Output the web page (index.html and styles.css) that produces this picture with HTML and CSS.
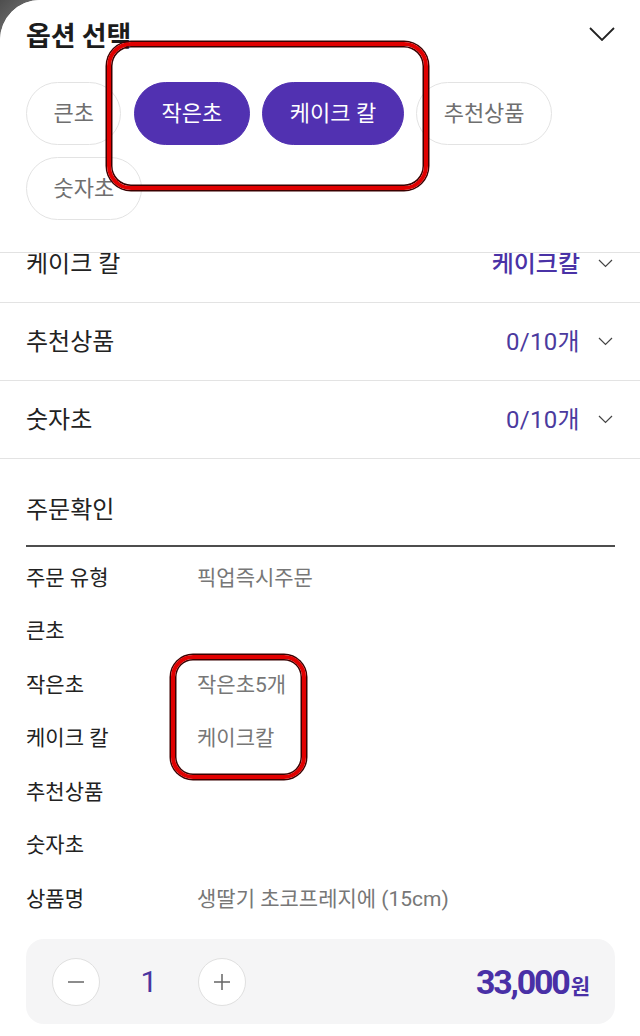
FILE: index.html
```html
<!DOCTYPE html>
<html lang="ko">
<head>
<meta charset="utf-8">
<title>옵션 선택</title>
<link rel="stylesheet" href="styles.css">
</head>
<body>
<div class="sheet">
  <header class="opt-head">
    <div class="opt-title-row">
      <h2 class="opt-title">옵션 선택</h2>
      <svg class="head-chev" width="26" height="14" viewBox="0 0 26 14"><path d="M1 1 L13 13 L25 1" fill="none" stroke="#222" stroke-width="1.8"/></svg>
    </div>
    <div class="chips">
      <span class="chip">큰초</span>
      <span class="chip chip-on">작은초</span>
      <span class="chip chip-on">케이크 칼</span>
      <span class="chip">추천상품</span>
      <span class="chip">숫자초</span>
    </div>
  </header>

  <div class="scroll">
    <div class="opt-list">
      <div class="opt-row">
        <span class="opt-label">케이크 칼</span>
        <span class="opt-right"><span class="opt-val opt-val-strong">케이크칼</span><svg class="row-chev" width="15" height="9" viewBox="0 0 15 9"><path d="M1 1 L7.5 7.5 L14 1" fill="none" stroke="#444" stroke-width="1.2"/></svg></span>
      </div>
      <div class="opt-row">
        <span class="opt-label">추천상품</span>
        <span class="opt-right"><span class="opt-val">0/10개</span><svg class="row-chev" width="15" height="9" viewBox="0 0 15 9"><path d="M1 1 L7.5 7.5 L14 1" fill="none" stroke="#444" stroke-width="1.2"/></svg></span>
      </div>
      <div class="opt-row">
        <span class="opt-label">숫자초</span>
        <span class="opt-right"><span class="opt-val">0/10개</span><svg class="row-chev" width="15" height="9" viewBox="0 0 15 9"><path d="M1 1 L7.5 7.5 L14 1" fill="none" stroke="#444" stroke-width="1.2"/></svg></span>
      </div>
    </div>

    <section class="confirm">
      <h3 class="confirm-title">주문확인</h3>
      <dl class="confirm-list">
        <dt>주문 유형</dt><dd>픽업즉시주문</dd>
        <dt>큰초</dt><dd></dd>
        <dt>작은초</dt><dd>작은초5개</dd>
        <dt>케이크 칼</dt><dd>케이크칼</dd>
        <dt>추천상품</dt><dd></dd>
        <dt>숫자초</dt><dd></dd>
        <dt>상품명</dt><dd>생딸기 초코프레지에 (15cm)</dd>
      </dl>
      <div class="qty-bar">
        <button class="qty-btn" type="button" aria-label="빼기"><svg width="18" height="18" viewBox="0 0 18 18"><path d="M1 9 H17" stroke="#666" stroke-width="1.5"/></svg></button>
        <span class="qty-num">1</span>
        <button class="qty-btn" type="button" aria-label="더하기"><svg width="18" height="18" viewBox="0 0 18 18"><path d="M1 9 H17 M9 1 V17" stroke="#666" stroke-width="1.5"/></svg></button>
        <span class="price"><span class="price-num">33,000</span><span class="price-unit">원</span></span>
      </div>
    </section>
  </div>

  <div class="mark mark-chips"></div>
  <div class="mark mark-values"></div>
</div>
</body>
</html>
```

FILE: styles.css
```css
* { box-sizing: border-box; }
html, body { margin: 0; padding: 0; }
body {
  background: linear-gradient(135deg, #4e4e4e, #8a8a8a 60px);
  font-family: Roboto, "Noto Sans CJK KR", sans-serif;
  color: #222;
}
.sheet {
  position: relative;
  width: 640px;
  height: 1036px;
  background: #fff;
  border-top-left-radius: 40px;
  overflow: hidden;
  display: flex;
  flex-direction: column;
}

/* header */
.opt-head {
  padding: 21px 25px 32px 26px;
  border-bottom: 1px solid #e2e2e2;
  background: #fff;
}
.opt-title-row {
  display: flex;
  justify-content: space-between;
  align-items: flex-start;
}
.opt-title {
  margin: 0;
  font-size: 27px;
  line-height: 32px;
  font-weight: 700;
  letter-spacing: -0.2px;
  color: #1c1c1c;
}
.head-chev { margin-top: 6px; }
.chips {
  margin-top: 29px;
  display: flex;
  flex-wrap: wrap;
  gap: 12px 12.5px;
}
.chip {
  height: 63px;
  line-height: 61px;
  padding: 0 26.5px;
  border: 1px solid #e3e3e3;
  border-radius: 32px;
  font-size: 22px;
  color: #6f6f6f;
  background: #fff;
  white-space: nowrap;
}
.chip-on {
  background: #5131b1;
  border-color: #5131b1;
  color: #fff;
}

/* option list */
.scroll {
  flex: 1;
  overflow: hidden;
}
.opt-list { margin-top: -28px; }
.opt-row {
  height: 78px;
  padding: 0 27px 4px 26px;
  border-bottom: 1px solid #e3e3e3;
  display: flex;
  align-items: center;
  justify-content: space-between;
}
.opt-label {
  font-size: 24px;
  color: #222;
}
.opt-right {
  display: flex;
  align-items: center;
  gap: 18px;
}
.opt-val {
  font-size: 24px;
  color: #4b3a9e;
  letter-spacing: 0.3px;
}
.opt-val-strong { font-weight: 500; color: #4a32a6; letter-spacing: 0; }
.row-chev { display: block; margin-top: 3px; }

/* confirm */
.confirm { padding: 0 25px 0 26px; }
.confirm-title {
  margin: 35px 0 0;
  padding-bottom: 19px;
  border-bottom: 2px solid #4d4d4d;
  font-size: 24px;
  line-height: 32px;
  font-weight: 400;
  color: #222;
}
.confirm-list {
  margin: 0;
  padding-top: 2px;
  display: grid;
  grid-template-columns: 171px 1fr;
  grid-auto-rows: 53.5px;
  align-items: center;
}
.confirm-list dt {
  font-size: 21px;
  color: #222;
}
.confirm-list dd {
  margin: 0;
  font-size: 21px;
  color: #777;
  letter-spacing: 0;
}
.qty-bar {
  margin-top: 15.5px;
  height: 85px;
  background: #f5f5f6;
  border-radius: 18px;
  padding: 0 25px 0 26px;
  display: flex;
  align-items: center;
}
.qty-btn {
  width: 48px;
  height: 48px;
  border-radius: 50%;
  border: 1px solid #e0e0e0;
  background: #fff;
  padding: 0;
  display: flex;
  align-items: center;
  justify-content: center;
}
.qty-num {
  width: 98px;
  text-align: center;
  font-size: 30px;
  color: #4a35a0;
}
.price {
  margin-left: auto;
  color: #4930a6;
  display: flex;
  align-items: baseline;
}
.price-num {
  font-size: 34px;
  font-weight: 700;
  letter-spacing: -2.2px;
}
.price-unit {
  font-size: 21px;
  font-weight: 700;
  margin-left: 2px;
}

/* red annotation marks */
.mark {
  position: absolute;
  border: 4px solid #e10000;
  border-radius: 24px;
  box-shadow: 0 0 0 1.5px #3a0000, inset 0 0 0 1.5px #3a0000;
  pointer-events: none;
}
.mark-chips { left: 107px; top: 42px; width: 321px; height: 148px; }
.mark-values { left: 171px; top: 655px; width: 135px; height: 124px; border-radius: 22px; }
```
